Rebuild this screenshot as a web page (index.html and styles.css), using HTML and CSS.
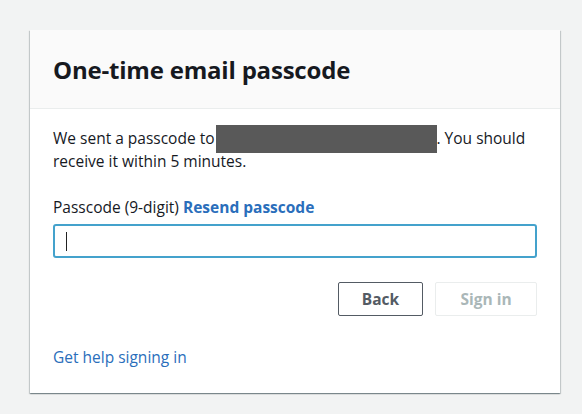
FILE: index.html
```html
<!DOCTYPE html>
<html lang="en">
<head>
<meta charset="utf-8">
<title>One-time email passcode</title>
<link rel="stylesheet" href="styles.css">
</head>
<body>
<div class="card">
  <div class="card-header">
    <h1 class="title">One-time email passcode</h1>
  </div>
  <div class="card-body">
    <p class="message">We sent a passcode to<span class="redacted"></span>. You should receive it within 5 minutes.</p>
    <label class="label" for="code">Passcode (9-digit) <a class="link strong" href="#">Resend passcode</a></label>
    <div class="input"><span class="caret"></span></div>
    <div class="actions">
      <button class="btn btn-back">Back</button>
      <button class="btn btn-disabled">Sign in</button>
    </div>
    <a class="link help" href="#">Get help signing in</a>
  </div>
</div>
</body>
</html>
```
FILE: styles.css
```css
html, body {
  margin: 0;
  padding: 0;
}
body {
  background: #f2f3f3;
  font-family: "Open Sans", "Noto Sans", Arial, sans-serif;
  color: #16191f;
  padding-top: 30px;
  height: 414px;
  box-sizing: border-box;
}
.card {
  margin-left: 30px;
  width: 530px;
  background: #fff;
  box-shadow: 0 1px 1px 0 rgba(0, 28, 36, 0.3), 1px 1px 1px 0 rgba(0, 28, 36, 0.15), -1px 1px 1px 0 rgba(0, 28, 36, 0.15);
}
.card-header {
  background: #fafafa;
  border-bottom: 1px solid #eaeded;
  height: 79px;
  box-sizing: border-box;
  padding: 0 23px;
  display: flex;
  align-items: center;
}
.title {
  margin: 0;
  font-size: 24px;
  font-weight: 700;
  line-height: 30px;
  letter-spacing: -0.2px;
  padding-top: 1px;
}
.card-body {
  padding: 18px 23px 25px;
  font-size: 15.5px;
  line-height: 22px;
}
.message {
  margin: 0 0 24px;
}
.redacted {
  display: inline-block;
  width: 221px;
  height: 28px;
  margin: -3px 0 -3px 1px;
  background: #595959;
  vertical-align: -6px;
}
.label {
  display: block;
  margin-bottom: 6px;
}
.link {
  color: #2a6ebb;
  text-decoration: none;
}
.strong {
  font-weight: 700;
}
.input {
  height: 34px;
  box-sizing: border-box;
  border: 2px solid #44a2cc;
  border-radius: 3px;
  display: flex;
  align-items: center;
  padding-left: 11px;
}
.caret {
  width: 1px;
  height: 19px;
  background: #222;
}
.actions {
  display: flex;
  justify-content: flex-end;
  gap: 12px;
  margin-top: 24px;
}
.btn {
  height: 34px;
  box-sizing: border-box;
  border-radius: 2px;
  background: #fff;
  font-family: inherit;
  font-size: 15.5px;
  font-weight: 700;
  padding: 0;
}
.btn-back {
  width: 85px;
  border: 1px solid #545b64;
  color: #545b64;
}
.btn-disabled {
  width: 102px;
  border: 1px solid #eaeded;
  color: #aab7b8;
}
.help {
  display: inline-block;
  margin-top: 30px;
}
```
